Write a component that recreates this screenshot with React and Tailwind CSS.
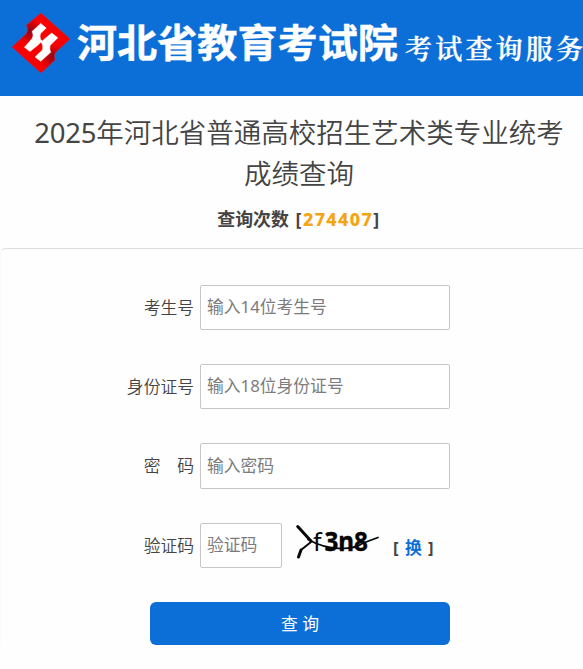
import React from 'react';

const fields = [
  { label: '考生号', placeholder: '输入14位考生号', type: 'text', box: 'h-[45px] mb-[34px]' },
  { label: '身份证号', placeholder: '输入18位身份证号', type: 'text', box: 'h-[45px] mb-[34px]' },
  { label: '密　码', placeholder: '输入密码', type: 'password', box: 'h-[46px] mb-[34px]' },
];

const inputClass =
  'h-full rounded-[2px] border border-[#c6c6c6] bg-white px-[6px] pb-[2px] text-[16.8px] placeholder:text-[#7c7c7c] outline-none';

const diamond = 'M29 1 L58 27 L44 40 Q41 43 43 48 L29 61 L0 35 L14 22 Q17 18 14.5 13 Z';

function Logo() {
  return (
    <svg className="ml-3 h-[62px] w-[59px] shrink-0" viewBox="0 0 59 62">
      <defs>
        <radialGradient id="foldLeft" cx="17" cy="19" r="13" gradientUnits="userSpaceOnUse">
          <stop offset="0" stopColor="#8f0512" />
          <stop offset="1" stopColor="#8f0512" stopOpacity="0" />
        </radialGradient>
        <radialGradient id="foldRight" cx="41" cy="45" r="13" gradientUnits="userSpaceOnUse">
          <stop offset="0" stopColor="#8f0512" />
          <stop offset="1" stopColor="#8f0512" stopOpacity="0" />
        </radialGradient>
      </defs>
      <path d={diamond} fill="#fb0000" />
      <path d={diamond} fill="url(#foldLeft)" />
      <path d={diamond} fill="url(#foldRight)" stroke="#b02c55" strokeWidth="0.7" />
      <path
        d="M28.7 11.4 L34.2 16 L28.5 21.8 Q27.5 24 28.5 27.5 L30.6 29 L31.5 27.8 L39.7 21 L45.8 25.8 L38.3 33.3 Q37 36 38.7 40.3 L28.7 49.3 L23 45 L30.4 38 Q31.3 35 30 31.3 L28.5 30.5 L26.3 32.8 L18 39.5 L12.4 35.3 L20.3 26.3 Q22 23 20 19.5 Z"
        fill="#fff"
        stroke="#fff"
        strokeWidth="0.5"
      />
    </svg>
  );
}

function Header() {
  return (
    <header className="h-24 overflow-hidden bg-[#0c6fd8]">
      <div className="flex h-[85px] items-center">
        <Logo />
        <svg className="h-[85px] w-[512px] shrink-0" viewBox="71 0 512 85" fill="#fff">
          <text
            x="77"
            y="57"
            textLength="321"
            lengthAdjust="spacingAndGlyphs"
            stroke="#fff"
            strokeWidth="0.4"
            className="font-['Noto_Sans_CJK_SC',sans-serif] text-[39px] font-bold"
          >
            河北省教育考试院
          </text>
          <text
            x="405"
            y="58.5"
            textLength="178"
            stroke="#fff"
            strokeWidth="0.3"
            className="font-['Noto_Serif_CJK_SC','Noto_Sans_CJK_SC',serif] text-[27px] font-semibold"
          >
            考试查询服务
          </text>
        </svg>
      </div>
    </header>
  );
}

function Captcha() {
  return (
    <svg className="-mt-[9px] ml-[11px] h-[40px] w-[90px]" viewBox="293 521 90 40">
      <g fill="#050505" className="font-['Noto_Sans',sans-serif]">
        <text x="313" y="551" className="text-[25px]">f</text>
        <text
          x="324.5"
          y="551"
          stroke="#050505"
          strokeWidth="0.4"
          textLength="43.5"
          lengthAdjust="spacingAndGlyphs"
          className="text-[26px] font-bold"
        >
          3n8
        </text>
      </g>
      <g fill="none" stroke="#080808" strokeLinecap="round">
        <path d="M297.7 526.5 L311 541" strokeWidth="3" />
        <path d="M311 542 L301 550" strokeWidth="2" />
        <path d="M301 550 L298.5 557" strokeWidth="3" />
        <path d="M308 539.5 Q325 549 343 548.5 Q357 548 362 543.5 L378 537.5" strokeWidth="1.7" />
      </g>
    </svg>
  );
}

export default function App() {
  return (
    <div className="h-[669px] overflow-hidden bg-[#fefefe] font-['Noto_Sans','Noto_Sans_CJK_SC',sans-serif] text-[#444]">
      <Header />
      <h1 className="ml-[15px] mt-4 text-center text-[27.5px] leading-[41px] font-[350] whitespace-nowrap">
        <span className="font-normal tracking-[-0.2px]">2025</span>年河北省普通高校招生艺术类专业统考
        <br />
        成绩查询
      </h1>
      <p className="ml-[15px] mt-[13px] h-6 text-center text-[17.9px] leading-6 font-bold whitespace-nowrap [word-spacing:2px]">
        查询次数{' '}
        <span className="tracking-[1.4px]">
          [<span className="font-['Noto_Sans',sans-serif] font-extrabold text-[#f5a414]">274407</span>]
        </span>
      </p>
      <form
        className="mt-[17px] -mr-2 rounded-tl-[6px] border-t border-l border-[#ddd] border-l-[#fafafa] pt-9"
        onSubmit={(e) => e.preventDefault()}
      >
        {fields.map((field) => (
          <div key={field.label} className={`flex items-center ${field.box}`}>
            <label className="w-[193px] shrink-0 text-right text-[16.8px] font-[350]">{field.label}</label>
            <input type={field.type} placeholder={field.placeholder} className={`ml-[6px] w-[250px] ${inputClass}`} />
          </div>
        ))}
        <div className="flex h-[45px] items-center">
          <label className="w-[193px] shrink-0 text-right text-[16.8px] font-[350]">验证码</label>
          <input type="text" placeholder="验证码" className={`ml-[6px] w-[82px] ${inputClass}`} />
          <Captcha />
          <span className="mt-1 ml-[10px] text-[16.8px] font-bold whitespace-nowrap [word-spacing:2px]">
            [ <a className="text-[#0c6fd8]">换</a> ]
          </span>
        </div>
        <button
          type="submit"
          className="mt-[34px] ml-[149px] block h-[43px] w-[300px] rounded-[6px] bg-[#0c6fd8] text-[16.8px] text-white"
        >
          查 询
        </button>
      </form>
    </div>
  );
}
